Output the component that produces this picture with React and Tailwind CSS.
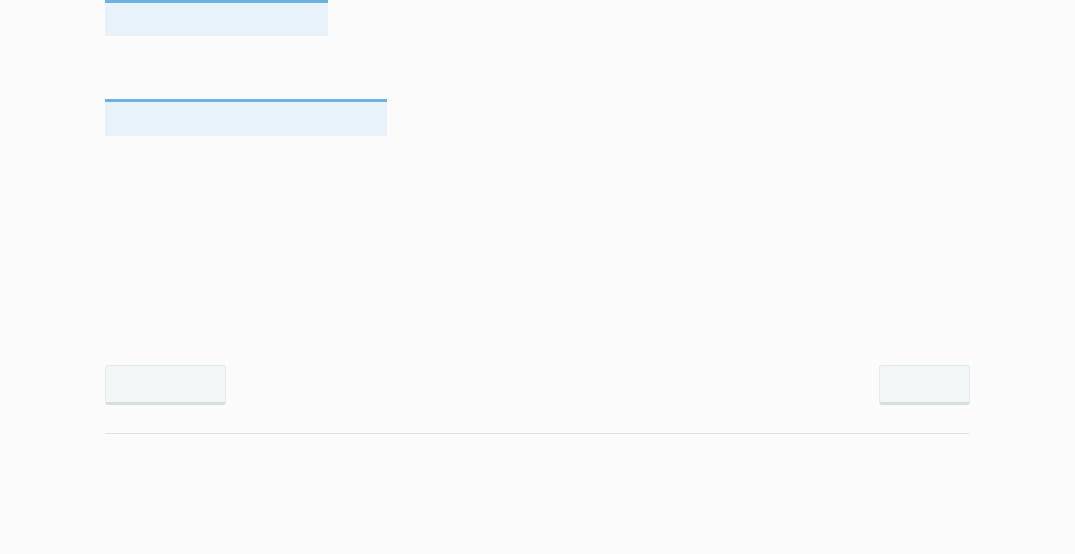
export default function App() {
  return (
    <div className="min-h-[554px] w-full bg-[#fbfbfb] font-['Liberation_Sans',sans-serif]">
      <div className="mx-auto w-[865px]">
        <div className="h-[36px] w-[223px] border-t-[3px] border-[#6cb2e0] bg-[#e8f2fb]" />
        <div className="mt-[63px] h-[37px] w-[282px] border-t-[3px] border-[#6cb2e0] bg-[#e8f2fb]" />
        <div className="mt-[229px] flex items-start justify-between">
          <button
            type="button"
            className="h-[40px] w-[121px] rounded-[3px] border border-[#e6ebec] border-b-[3px] border-b-[#d9dfe1] bg-[#f2f6f7]"
          />
          <button
            type="button"
            className="h-[40px] w-[91px] rounded-[3px] border border-[#e6ebec] border-b-[3px] border-b-[#d9dfe1] bg-[#f2f6f7]"
          />
        </div>
        <div className="mt-[28px] h-px w-[864px] bg-[#e2e2e2]" />
      </div>
    </div>
  );
}
